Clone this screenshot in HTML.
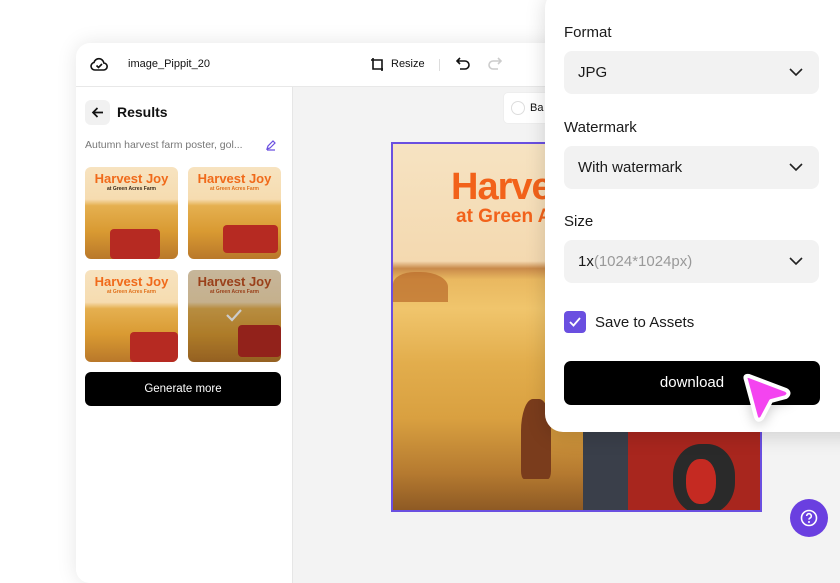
<!DOCTYPE html>
<html><head><meta charset="utf-8"><style>
*{margin:0;padding:0;box-sizing:border-box}
body{width:840px;height:560px;overflow:hidden;background:#fff;font-family:"Liberation Sans",sans-serif;position:relative}
.win{position:absolute;left:76px;top:43px;width:800px;height:540px;background:#fff;border-radius:14px;box-shadow:0 0 20px rgba(0,0,0,.1);overflow:hidden}
.hdr{height:44px;border-bottom:1px solid #e8e8e8;position:relative}
.left{position:absolute;left:0;top:44px;width:217px;bottom:0;border-right:1px solid #e6e6e6;background:#fff}
.canvas{position:absolute;left:217px;top:44px;right:0;bottom:0;background:#f3f3f3}
.thumb{position:absolute;width:93px;height:92px;border-radius:6px;overflow:hidden;background:linear-gradient(#f7e3c0 0,#f6dcb0 35%,#e5b050 42%,#d99a32 70%,#b9782a 100%)}
.thumb .t1{position:absolute;top:5px;left:0;right:0;text-align:center;color:#f06a1a;font-weight:bold;font-size:13px;line-height:14px}
.thumb .t2{position:absolute;top:19px;left:0;right:0;text-align:center;color:#3a2a1a;font-weight:bold;font-size:5px}
.trac{position:absolute;background:#b62a22;border-radius:4px}
.panel{position:absolute;left:545px;top:-10px;width:330px;height:442px;background:#fff;border-radius:18px;box-shadow:0 4px 20px rgba(0,0,0,.15)}
.lbl{position:absolute;left:19px;font-size:15px;color:#1a1a1a}
.sel{position:absolute;left:19px;width:255px;height:43px;background:#f2f2f2;border-radius:8px;font-size:15px;color:#1a1a1a;padding:13px 0 0 14px}
.sel svg{position:absolute;right:16px;top:17px}
</style></head><body>
<div class="win">
 <div class="hdr">
  <svg style="position:absolute;left:14px;top:13px" width="18" height="16" viewBox="0 0 18 16"><path d="M5 14h8.5a3.5 3.5 0 0 0 .3-7A5 5 0 0 0 4 6.5 3.8 3.8 0 0 0 5 14z" fill="none" stroke="#111" stroke-width="1.6"/><path d="M6.5 9.5l2 2 3.5-3.5" fill="none" stroke="#111" stroke-width="1.6"/></svg>
  <div style="position:absolute;left:52px;top:15px;font-size:11px;color:#111">image_Pippit_20</div>
  <svg style="position:absolute;left:294px;top:14px" width="15" height="15" viewBox="0 0 15 15"><path d="M3 1v11h10M1 3h11v11" fill="none" stroke="#111" stroke-width="1.6"/></svg>
  <div style="position:absolute;left:315px;top:15px;font-size:11px;color:#111">Resize</div>
  <div style="position:absolute;left:363px;top:16px;width:1px;height:12px;background:#ddd"></div>
  <svg style="position:absolute;left:380px;top:14px" width="15" height="14" viewBox="0 0 15 14"><path d="M4 1L1 4l3 3M1 4h8a4 4 0 0 1 0 8H4" fill="none" stroke="#111" stroke-width="1.6"/></svg>
  <svg style="position:absolute;left:411px;top:14px" width="15" height="14" viewBox="0 0 15 14"><path d="M11 1l3 3-3 3M14 4H6a4 4 0 0 0 0 8h5" fill="none" stroke="#ccc" stroke-width="1.6"/></svg>
 </div>
 <div class="left">
  <div style="position:absolute;left:9px;top:13px;width:25px;height:25px;background:#f1f1f1;border-radius:6px"></div>
  <svg style="position:absolute;left:15px;top:19px" width="13" height="13" viewBox="0 0 13 13"><path d="M12 6.5H2M6.5 2L2 6.5 6.5 11" fill="none" stroke="#111" stroke-width="1.7"/></svg>
  <div style="position:absolute;left:41px;top:17px;font-size:14px;font-weight:bold;color:#111">Results</div>
  <div style="position:absolute;left:9px;top:52px;font-size:10.5px;color:#777">Autumn harvest farm poster, gol...</div>
  <svg style="position:absolute;left:189px;top:52px" width="12" height="12" viewBox="0 0 12 12"><path d="M2 10l1-3 5-5 2 2-5 5zM2 11h8" fill="none" stroke="#6a4fe0" stroke-width="1.2"/></svg>
  <div class="thumb" style="left:9px;top:80px"><div class="t1">Harvest Joy</div><div class="t2">at Green Acres Farm</div><div class="trac" style="left:25px;top:62px;width:50px;height:30px"></div></div>
  <div class="thumb" style="left:112px;top:80px"><div class="t1">Harvest Joy</div><div class="t2" style="color:#e0701a">at Green Acres Farm</div><div class="trac" style="left:35px;top:58px;width:55px;height:28px"></div></div>
  <div class="thumb" style="left:9px;top:183px"><div class="t1">Harvest Joy</div><div class="t2" style="color:#e0701a">at Green Acres Farm</div><div class="trac" style="left:45px;top:62px;width:48px;height:30px"></div></div>
  <div class="thumb" style="left:112px;top:183px;filter:brightness(.8)"><div class="t1" style="color:#c05020">Harvest Joy</div><div class="t2" style="color:#c05020">at Green Acres Farm</div><div class="trac" style="left:50px;top:55px;width:43px;height:32px"></div><svg style="position:absolute;left:37px;top:38px" width="18" height="14" viewBox="0 0 18 14"><path d="M2 7l5 5L16 2" fill="none" stroke="#fff" stroke-width="2.2"/></svg></div>
  <div style="position:absolute;left:9px;top:285px;width:196px;height:34px;background:#000;border-radius:6px;color:#fff;font-size:11.5px;text-align:center;line-height:34px">Generate more</div>
 </div>
 <div class="canvas">
  <div style="position:absolute;left:210px;top:5px;width:60px;height:32px;background:#fff;border-radius:5px;border:1px solid #eee"></div>
  <div style="position:absolute;left:218px;top:14px;width:14px;height:14px;border-radius:50%;border:1px solid #ddd"></div>
  <div style="position:absolute;left:237px;top:15px;font-size:11px;color:#111">Ba</div>
  <div style="position:absolute;left:98px;top:55px;width:371px;height:370px;border:2px solid #6a4fe0;overflow:hidden;background:linear-gradient(#f6e3c2 0,#f4d9b0 32%,#c98a4a 34%,#e9b860 37%,#f0c56c 45%,#e2ad4c 60%,#d9a040 75%,#b57a30 90%,#8e5a24 100%)">
   <div style="position:absolute;left:58px;top:22px;font-size:38px;font-weight:bold;color:#f2621a;letter-spacing:-1px">Harvest Joy</div>
   <div style="position:absolute;left:63px;top:62px;font-size:19px;font-weight:bold;color:#f2621a">at Green Acres Farm</div>
   <div style="position:absolute;left:0;top:128px;width:55px;height:30px;background:#b9692a;border-radius:40% 50% 0 0;opacity:.7"></div>
   <div style="position:absolute;left:128px;top:255px;width:30px;height:80px;background:#7a3c1c;border-radius:40% 40% 10% 10%"></div>
   <div style="position:absolute;left:190px;top:230px;width:60px;height:140px;background:#3a3f4a"></div>
   <div style="position:absolute;left:235px;top:270px;width:140px;height:100px;background:#a8261e"></div>
   <div style="position:absolute;left:280px;top:300px;width:62px;height:70px;border-radius:45%;background:#2a2a2a"></div>
   <div style="position:absolute;left:293px;top:315px;width:30px;height:45px;border-radius:45%;background:#c52a22"></div>
  </div>
 </div>
</div>
<div style="position:absolute;left:790px;top:499px;width:38px;height:38px;border-radius:50%;background:#6a3fe0"></div>
<svg style="position:absolute;left:799px;top:508px" width="20" height="20" viewBox="0 0 20 20"><circle cx="10" cy="10" r="7.5" fill="none" stroke="#fff" stroke-width="1.6"/><path d="M7.7 8a2.3 2.3 0 1 1 3 2.2c-.6.3-.7.7-.7 1.4" fill="none" stroke="#fff" stroke-width="1.6"/><circle cx="10" cy="14" r="1" fill="#fff"/></svg>
<div class="panel">
 <div class="lbl" style="top:34px">Format</div>
 <div class="sel" style="top:61px">JPG<svg width="14" height="9" viewBox="0 0 14 9"><path d="M1 1l6 6 6-6" fill="none" stroke="#222" stroke-width="1.6"/></svg></div>
 <div class="lbl" style="top:129px">Watermark</div>
 <div class="sel" style="top:156px">With watermark<svg width="14" height="9" viewBox="0 0 14 9"><path d="M1 1l6 6 6-6" fill="none" stroke="#222" stroke-width="1.6"/></svg></div>
 <div class="lbl" style="top:223px">Size</div>
 <div class="sel" style="top:250px">1x<span style="color:#999">(1024*1024px)</span><svg width="14" height="9" viewBox="0 0 14 9"><path d="M1 1l6 6 6-6" fill="none" stroke="#222" stroke-width="1.6"/></svg></div>
 <div style="position:absolute;left:19px;top:321px;width:22px;height:22px;background:#6a4fe0;border-radius:4px"></div>
 <svg style="position:absolute;left:23px;top:326px" width="14" height="12" viewBox="0 0 14 12"><path d="M2 6l3.5 3.5L12 2" fill="none" stroke="#fff" stroke-width="1.8"/></svg>
 <div class="lbl" style="left:50px;top:324px">Save to Assets</div>
 <div style="position:absolute;left:19px;top:371px;width:256px;height:44px;background:#000;border-radius:7px;color:#fff;font-size:15px;text-align:center;line-height:44px">download</div>
</div>
<svg style="position:absolute;left:738px;top:370px;filter:drop-shadow(0 3px 6px rgba(0,0,0,.2))" width="56" height="56" viewBox="0 0 56 56"><path d="M8 10Q6 5 11 6L48 20Q53 23 48 27L33 31 24 48Q20 52 18 47Z" fill="#f444f0" stroke="#fff" stroke-width="4" stroke-linejoin="round"/></svg>
</body></html>
